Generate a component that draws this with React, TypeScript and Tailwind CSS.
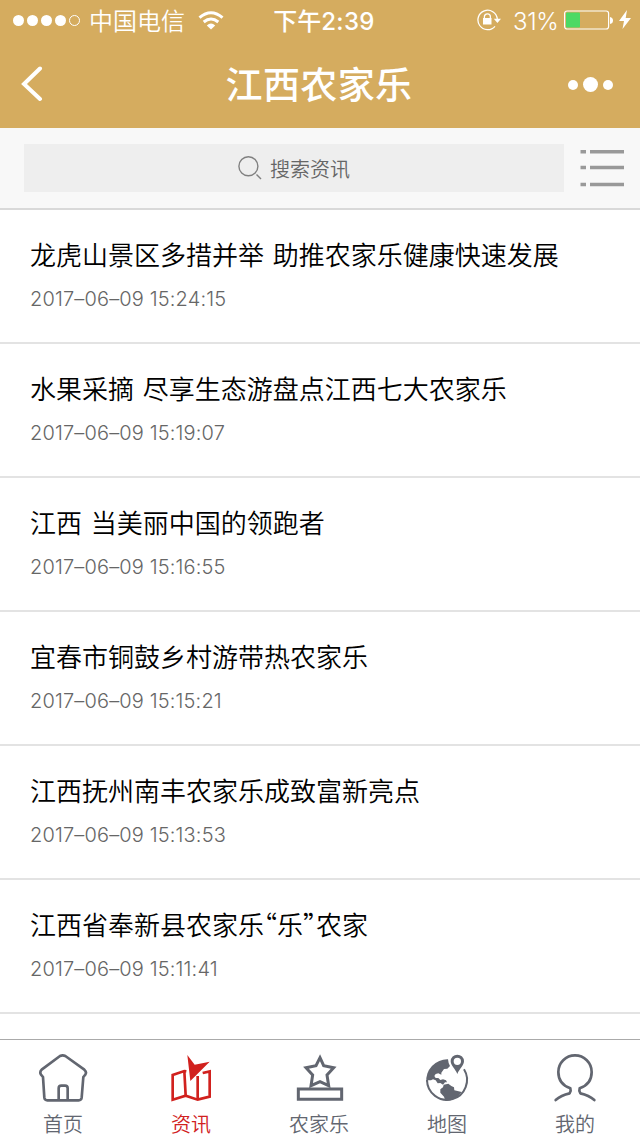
import type { ReactNode } from 'react';

interface Article {
  title: string;
  time: string;
}

interface Tab {
  label: string;
  active?: boolean;
  icon: ReactNode;
}

const articles: Article[] = [
  { title: '龙虎山景区多措并举 助推农家乐健康快速发展', time: '2017–06–09 15:24:15' },
  { title: '水果采摘 尽享生态游盘点江西七大农家乐', time: '2017–06–09 15:19:07' },
  { title: '江西 当美丽中国的领跑者', time: '2017–06–09 15:16:55' },
  { title: '宜春市铜鼓乡村游带热农家乐', time: '2017–06–09 15:15:21' },
  { title: '江西抚州南丰农家乐成致富新亮点', time: '2017–06–09 15:13:53' },
  { title: '江西省奉新县农家乐“乐”农家', time: '2017–06–09 15:11:41' },
];

const HomeIcon = () => (
  <svg className="w-[52px] h-[52px]" viewBox="114 66 156 156" fill="none" stroke="currentColor" strokeWidth="8" strokeLinejoin="round">
    <path d="M180 78Q188 74 196 78L253 119Q261 126 256 134L250 141L245 203Q244 211 236 211H142Q134 211 133 203L129 141L123 134Q118 126 125 119Z" />
    <path d="M176 210V175Q176 167 184 167H195Q203 167 203 175V210" />
  </svg>
);

const NewsIcon = () => (
  <svg className="w-[52px] h-[52px]" viewBox="108 66 156 156" fill="none" stroke="currentColor" strokeWidth="8">
    <path d="M169 124L163 123L128 135V209L167 197L203 209L239 200V124L218 129" />
    <path d="M163 123L167 197M203 209V138" />
    <path d="M172 75L194 104L239 95L181 153Z" fill="currentColor" stroke="none" />
  </svg>
);

const FarmIcon = () => (
  <svg className="w-[52px] h-[52px]" viewBox="117 66 156 156" fill="none" stroke="currentColor" strokeWidth="9">
    <path d="M195 83L206 107L236 113L216 135L221 167L195 155L168 167L173 135L153 113L183 107Z" />
    <path d="M130 177H260V208H130Z" />
  </svg>
);

const MapIcon = () => (
  <svg className="w-[52px] h-[52px]" viewBox="111 66 156 156" fill="currentColor">
    <path d="M189 88Q190 101 195 108L187 116L177 117L169 128L169 134L160 130L152 132L148 138L152 144L160 144L166 150L174 148L183 151L186 157L180 157L174 164L166 159L158 160L152 151L144 148L138 151L129 151L124 157A63 63 0 0 1 189 88Z" />
    <path d="M176 164L190 161L199 168L207 172L208 181L230 186Q211 213 181 212L177 200L166 188L166 178L174 172Z" />
    <path d="M126 150A60 60 0 1 0 237 118" fill="none" stroke="currentColor" strokeWidth="6" />
    <path fillRule="evenodd" d="M217 132C211 117 197 107 197 94A20 20 0 0 1 237 94C237 107 223 117 217 132ZM217 83A11 11 0 1 0 217 105A11 11 0 1 0 217 83Z" />
  </svg>
);

const MineIcon = () => (
  <svg className="w-[52px] h-[52px]" viewBox="120 66 156 156" fill="none" stroke="currentColor" strokeWidth="8" strokeLinecap="round" strokeLinejoin="round">
    <path d="M137 210Q153 196 179 190Q184 183 181 175C158 167 145 149 145 126A50 50 0 0 1 245 126C245 149 232 167 209 175Q206 183 211 190Q237 196 253 210" />
  </svg>
);

const tabs: Tab[] = [
  { label: '首页', icon: <HomeIcon /> },
  { label: '资讯', icon: <NewsIcon />, active: true },
  { label: '农家乐', icon: <FarmIcon /> },
  { label: '地图', icon: <MapIcon /> },
  { label: '我的', icon: <MineIcon /> },
];

const StatusBar = () => (
  <div className="flex h-10 items-center text-2xl leading-10">
    <div className="flex w-[272px] items-center pl-[13px]">
      <svg className="w-[68px] h-3" viewBox="0 0 68 12" fill="white">
        <circle cx="5.5" cy="6.5" r="5.5" />
        <circle cx="19.5" cy="6.5" r="5.5" />
        <circle cx="33.5" cy="6.5" r="5.5" />
        <circle cx="47.5" cy="6.5" r="5.5" />
        <circle cx="61.5" cy="6.5" r="5" fill="none" stroke="white" />
      </svg>
      <span className="ml-2 pt-[3px] font-[350]">中国电信</span>
      <svg className="ml-[13px] h-[19px] w-[26px]" viewBox="0 0 26 19" fill="none" stroke="white" strokeWidth="3">
        <path d="M1.5 6.7Q13-3.2 24.5 6.7" />
        <path d="M5.7 11Q13 5 20.3 11" />
        <path d="M8.8 14.4Q13 10.6 17.2 14.4L13 18.6Z" fill="white" stroke="none" />
      </svg>
    </div>
    <div className="w-[104px] whitespace-nowrap pt-[3px] text-center font-medium">
      下午<span className="tracking-[0.3px]">2:39</span>
    </div>
    <div className="flex flex-1 items-center justify-end pr-[9px]">
      <svg className="h-[22px] w-6" viewBox="0 0 24 22" fill="none" stroke="white" strokeWidth="1.3">
        <path d="M20.3 10A9.7 9.7 0 1 0 18 17.3" />
        <path d="M16.8 9.8H24L20.4 14Z" fill="white" stroke="none" />
        <path d="M7.4 9.5V7.8A3 3 0 0 1 13.4 7.8V9.5" />
        <path d="M6 9H14.5V15.5H6Z" fill="white" stroke="none" />
      </svg>
      <span className="ml-[12px] w-[47px] whitespace-nowrap pt-[3px] font-[350] tracking-[-0.4px]">31%</span>
      <svg className="ml-1 mr-px h-5 w-[50px]" viewBox="0 0 50 20" fill="none">
        <rect x="0.6" y="1" width="44" height="18" rx="2.5" stroke="white" strokeWidth="1.2" />
        <rect x="2" y="2.5" width="14" height="15" rx="1" fill="#4cd964" />
        <path d="M46 7Q49 7.5 49 10.5T46 14Z" fill="white" />
      </svg>
      <svg className="ml-1 h-5 w-3" viewBox="0 0 12 20" fill="white">
        <path d="M8 0L0 11H5L3.5 19L12 8H6.7Z" />
      </svg>
    </div>
  </div>
);

const NavBar = () => (
  <div className="flex h-[88px] items-center justify-between">
    <svg className="ml-[21px] h-9 w-[22px]" viewBox="0 0 22 36" fill="none" stroke="white" strokeWidth="4" strokeLinecap="round">
      <path d="M19 2.5L3 18L19 33" />
    </svg>
    <h1 className="ml-[27px] pt-1 text-[37px] font-medium tracking-[0.4px]">江西农家乐</h1>
    <svg className="mr-[26px] h-4 w-[46px]" viewBox="0 0 46 16" fill="white">
      <circle cx="5" cy="9" r="5" />
      <circle cx="22.5" cy="8.5" r="7.5" />
      <circle cx="40" cy="9" r="5" />
    </svg>
  </div>
);

const SearchBar = () => (
  <div className="flex h-[82px] items-center border-b-2 border-[#d9d9d9] bg-[#f8f8f8] pl-6 pr-4">
    <div className="flex h-12 w-[540px] items-center justify-center bg-[#eeeeee] text-xl text-[#666]">
      <svg className="mr-2 h-6 w-6" viewBox="0 0 24 24" fill="none" stroke="#808080" strokeWidth="1.4">
        <circle cx="10.4" cy="10.3" r="9.5" />
        <path d="M18.5 18.5L23 23" />
      </svg>
      <span className="pt-[3px] font-[350]">搜索资讯</span>
    </div>
    <svg className="ml-4 h-[38px] w-11" viewBox="0 0 44 38" stroke="#999" strokeWidth="3.6">
      <path d="M0.5 2.8H6M10 2.8H44M0.5 18.5H6M10 18.5H44M0.5 35.5H6M10 35.5H44" />
    </svg>
  </div>
);

export default function App() {
  return (
    <div className="flex h-[1136px] w-[640px] flex-col overflow-hidden bg-white font-['Inter','Noto_Sans_CJK_SC',sans-serif]">
      <header className="bg-[#d5ac5f] text-white">
        <StatusBar />
        <NavBar />
      </header>
      <SearchBar />
      <main className="flex-1 overflow-hidden">
        {articles.map((article) => (
          <article key={article.time} className="h-[134px] border-b-2 border-[#e3e3e3] px-[30px] pt-[26px]">
            <h2 className="whitespace-nowrap font-['Noto_Sans_CJK_SC',sans-serif] text-[26px] font-[350] leading-9 text-black [font-feature-settings:'halt'] [word-spacing:3px]">
              {article.title}
            </h2>
            <p className="mt-3 text-xl font-[330] leading-[30px] tracking-[0.15px] text-[#666]">{article.time}</p>
          </article>
        ))}
      </main>
      <nav className="grid h-[97px] shrink-0 grid-cols-5 border-t border-[#aaa]">
        {tabs.map((tab) => (
          <div
            key={tab.label}
            className={`flex flex-col items-center pt-3 ${tab.active ? 'text-[#d1211e]' : 'text-[#626670]'}`}
          >
            {tab.icon}
            <span className="mr-[2px] mt-1.5 text-xl leading-[30px] font-[350]">{tab.label}</span>
          </div>
        ))}
      </nav>
    </div>
  );
}
